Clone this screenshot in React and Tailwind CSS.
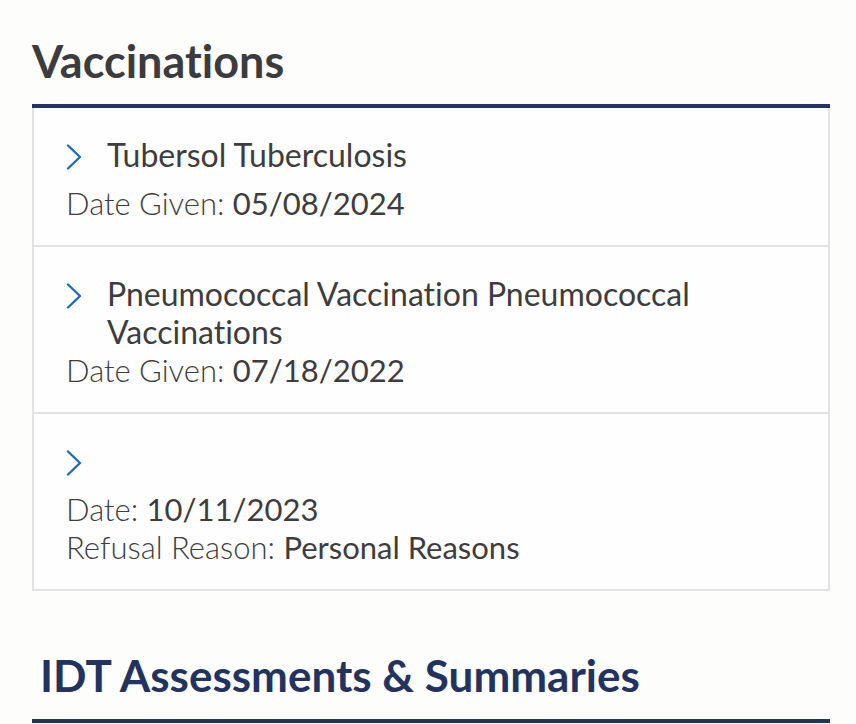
import React from "react";

const vaccinations = [
  {
    title: "Tubersol Tuberculosis",
    rows: [{ label: "Date Given:", value: "05/08/2024" }],
  },
  {
    title: "Pneumococcal Vaccination Pneumococcal Vaccinations",
    rows: [{ label: "Date Given:", value: "07/18/2022" }],
  },
  {
    title: "",
    rows: [
      { label: "Date:", value: "10/11/2023" },
      { label: "Refusal Reason:", value: "Personal Reasons" },
    ],
  },
];

const Chevron = () => (
  <svg width="16" height="26" viewBox="0 0 16 26" fill="none" className="block">
    <path d="M2 1.5 L14 13 L2 24.5" stroke="#1b6db8" strokeWidth="2.4" strokeLinecap="round" strokeLinejoin="round" />
  </svg>
);

const VaccinationItem = ({ title, rows }) => (
  <div className="px-[32px] pt-[22px] pb-[23px] border-b-2 border-[#e2e2e5] last:border-b-0">
    <div className="flex items-start">
      <div className="h-[54px] w-[41px] shrink-0 flex items-center">
        <Chevron />
      </div>
      <div className="pt-[6px] text-[32px] leading-[38px] text-[#3d3d3f]">{title}</div>
    </div>
    {rows.map((row, i) => (
      <div key={i} className="text-[31px] leading-[38px] text-[#3d3d3f]">
        <span className="font-light">{row.label} </span>
        <span className="font-normal">{row.value}</span>
      </div>
    ))}
  </div>
);

export default function App() {
  return (
    <div className="min-h-screen bg-[#fdfdfc] pt-[33px] font-['Lato','Liberation_Sans',sans-serif] [font-variant-ligatures:none]">
      <div className="ml-[32px] w-[798px]">
        <h2 className="text-[45px] leading-[56px] font-bold text-[#3c3c3e] mb-[15px]">Vaccinations</h2>
        <div className="border-t-4 border-[#243462]">
          <div className="border-2 border-t-0 border-[#e2e2e5] bg-[#fefefe]">
            {vaccinations.map((v, i) => (
              <VaccinationItem key={i} {...v} />
            ))}
          </div>
        </div>

        <h2 className="mt-[58px] pl-[8px] text-[44px] leading-[52px] font-bold text-[#233360] mb-[18px]">
          IDT Assessments &amp; Summaries
        </h2>
        <div className="border-t-4 border-[#243462]" />
      </div>
    </div>
  );
}
